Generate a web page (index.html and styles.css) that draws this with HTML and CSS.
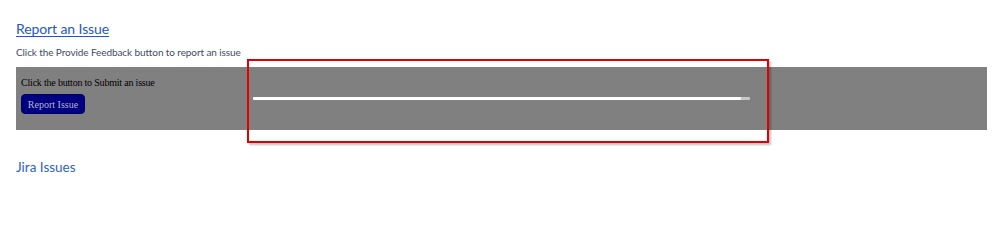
FILE: index.html
```html
<!DOCTYPE html>
<html>
<head>
<meta charset="utf-8">
<link rel="stylesheet" href="styles.css">
</head>
<body>
<div class="page">
  <h2 class="title"><a href="#">Report an Issue</a></h2>
  <p class="subtitle">Click the Provide Feedback button to report an issue</p>
  <div class="panel">
    <div class="panel-left">
      <div class="panel-text">Click the button to Submit an issue</div>
      <button class="report-btn">Report Issue</button>
    </div>
  </div>
  <h3 class="jira">Jira Issues</h3>
</div>
<div class="highlight">
  <div class="track"><div class="track-fill"></div></div>
</div>
</body>
</html>
```
FILE: styles.css
```css
html, body {
  margin: 0;
  padding: 0;
  background: #ffffff;
}
body {
  position: relative;
  width: 999px;
  height: 244px;
  overflow: hidden;
}
.page {
  padding: 19px 12px 0 16px;
  font-family: "Lato", "Noto Sans", sans-serif;
}
.title {
  margin: 0;
  font-size: 14px;
  font-weight: 400;
  line-height: 20px;
  letter-spacing: -0.1px;
}
.title a {
  color: #1f57c3;
  text-decoration: underline;
  text-underline-offset: 2px;
}
.subtitle {
  margin: 5px 0 0 0;
  font-size: 10px;
  line-height: 16px;
  color: #3e4b66;
  letter-spacing: -0.1px;
}
.panel {
  margin-top: 7px;
  height: 63px;
  background: #808080;
  display: flex;
}
.panel-left {
  padding: 9px 0 0 5px;
  display: flex;
  flex-direction: column;
  align-items: flex-start;
}
.panel-text {
  font-family: "Liberation Serif", serif;
  font-size: 10px;
  line-height: 13px;
  letter-spacing: -0.2px;
  color: #000;
}
.report-btn {
  margin-top: 5px;
  height: 20px;
  width: 64px;
  padding: 0;
  background: #000080;
  border: 1px solid #00006a;
  border-radius: 4px;
  color: #b4b4d2;
  font-family: "Liberation Serif", serif;
  font-size: 10px;
}
.jira {
  margin: 27px 0 0 0;
  font-size: 13.5px;
  font-weight: 400;
  line-height: 20px;
  color: #2a63c9;
}
.highlight {
  position: absolute;
  left: 247px;
  top: 59px;
  width: 514px;
  height: 80px;
  border: 2px solid #e00000;
  box-shadow: 2px 2px 2px rgba(0,0,0,0.25);
  display: flex;
  align-items: center;
  padding-left: 4px;
}
.track {
  width: 497px;
  height: 3px;
  margin-top: -5px;
  background: #c8c8c8;
  border-radius: 1px;
}
.track-fill {
  width: 488px;
  height: 3px;
  background: #ffffff;
  border-radius: 1px;
}
```
